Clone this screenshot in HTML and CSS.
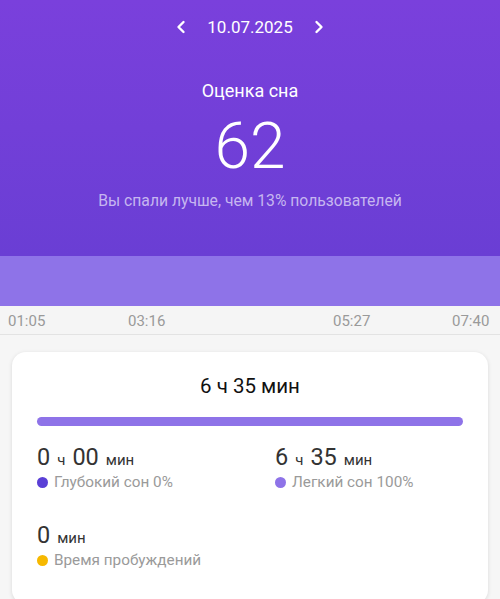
FILE: index.html
```html
<!DOCTYPE html>
<html lang="ru">
<head>
  <meta charset="UTF-8">
  <title>Сон</title>
  <meta name="viewport" content="width=device-width, initial-scale=1.0">
  <link rel="stylesheet" href="styles.css">
</head>
<body>

  <header class="hero">
    <div class="date-nav">
      <svg class="chev" width="12" height="16" viewBox="0 0 12 16"><polyline points="8.5,3 3.5,8 8.5,13" /></svg>
      <span class="date">10.07.2025</span>
      <svg class="chev" width="12" height="16" viewBox="0 0 12 16"><polyline points="3.5,3 8.5,8 3.5,13" /></svg>
    </div>
    <div class="score-title">Оценка сна</div>
    <div class="score">62</div>
    <div class="score-note">Вы спали лучше, чем 13% пользователей</div>
  </header>

  <div class="sleep-band"></div>

  <div class="axis">
    <span style="left:8px">01:05</span>
    <span style="left:128px">03:16</span>
    <span style="left:333px">05:27</span>
    <span style="left:452px">07:40</span>
  </div>

  <section class="card">
    <div class="total">6 ч 35 мин</div>
    <div class="bar"></div>

    <div class="stats">
      <div class="stat">
        <div class="value"><b>0</b><small>ч</small><b>00</b><small>мин</small></div>
        <div class="legend"><i class="dot deep"></i>Глубокий сон 0%</div>
      </div>
      <div class="stat">
        <div class="value"><b>6</b><small>ч</small><b>35</b><small>мин</small></div>
        <div class="legend"><i class="dot light"></i>Легкий сон 100%</div>
      </div>
      <div class="stat">
        <div class="value"><b>0</b><small>мин</small></div>
        <div class="legend"><i class="dot awake"></i>Время пробуждений</div>
      </div>
    </div>
  </section>

</body>
</html>
```

FILE: styles.css
```css
body {
  margin: 0;
  background: #f6f6f6;
  font-family: Roboto, 'Noto Sans', sans-serif;
  color: #222;
}

.hero {
  height: 256px;
  background: linear-gradient(#7a40dc, #6a3ed4);
  color: white;
  text-align: center;
  box-sizing: border-box;
  padding-top: 14px;
}

.date-nav {
  display: flex;
  justify-content: center;
  align-items: center;
  gap: 20px;
  height: 26px;
}

.date {
  font-size: 17px;
}

.chev polyline {
  fill: none;
  stroke: white;
  stroke-width: 2.4;
  stroke-linecap: round;
  stroke-linejoin: round;
}

.score-title {
  margin-top: 40px;
  font-size: 18px;
}

.score {
  margin-top: 8px;
  font-size: 64px;
  font-weight: 300;
  line-height: 76px;
}

.score-note {
  margin-top: 6px;
  font-size: 15.7px;
  color: #c6b6f0;
}

.sleep-band {
  height: 50px;
  background: #8e73e8;
}

.axis {
  position: relative;
  height: 28px;
  border-bottom: 1px solid #e3e3e3;
  background: #f5f5f5;
}

.axis span {
  position: absolute;
  top: 6px;
  font-size: 15px;
  color: #9a9a9a;
}

.card {
  margin: 17px 12px 0;
  background: white;
  border-radius: 14px;
  box-shadow: 0 1px 4px rgba(0, 0, 0, 0.12);
  padding: 22px 25px 35px;
}

.total {
  text-align: center;
  font-size: 20.5px;
  color: #111;
}

.bar {
  margin-top: 19px;
  height: 9px;
  border-radius: 5px;
  background: #8e73e8;
}

.stats {
  display: grid;
  grid-template-columns: 238px 1fr;
  row-gap: 30px;
  margin-top: 17px;
}

.value {
  display: flex;
  align-items: baseline;
  gap: 7px;
  color: #333;
}

.value b {
  font-weight: 400;
  font-size: 23.5px;
}

.value small {
  font-size: 15px;
}

.legend {
  display: flex;
  align-items: center;
  gap: 6px;
  margin-top: 2px;
  font-size: 15.3px;
  color: #9a9a9a;
}

.dot {
  width: 11px;
  height: 11px;
  border-radius: 50%;
}

.dot.deep { background: #5a3fd6; }
.dot.light { background: #8e73e8; }
.dot.awake { background: #f6b800; }
```
